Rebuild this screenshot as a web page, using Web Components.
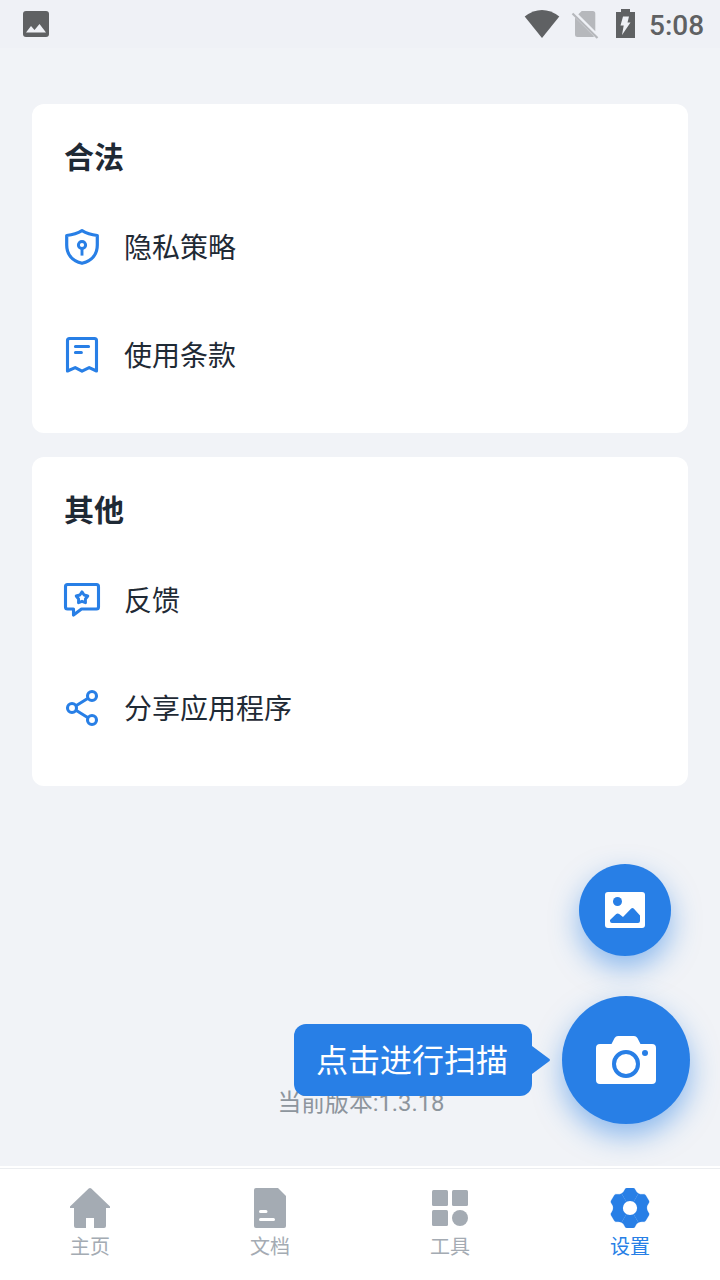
<!DOCTYPE html>
<html lang="zh-CN">
<head>
<meta charset="utf-8">
<title>设置</title>
<style>
body{margin:0;font-family:Roboto,"Noto Sans CJK SC",sans-serif;background:#f1f3f7}
</style>
</head>
<body>
<settings-screen></settings-screen>
<script>
const define = (name, html) => {
  const t = document.createElement('template');
  t.innerHTML = html;
  customElements.define(name, class extends HTMLElement {
    constructor() {
      super();
      this.attachShadow({mode: 'open'}).append(t.content.cloneNode(true));
    }
  });
};

// One gear tooth, repeated every 60 degrees around the hub.
const tooth = 'M0 0L-8.400-14.600Q-6.200-15.900-5.300-18.300Q-4.800-20-3.300-20L3.300-20Q4.800-20 5.300-18.300Q6.200-15.900 8.400-14.600Z';
const gear = `<g fill="currentColor" transform="translate(20 20)">${[0, 60, 120, 180, 240, 300].map(a => `<path d="${tooth}" stroke="currentColor" stroke-width=".2" transform="rotate(${a})"/>`).join('')}<circle r="7.100" fill="#fff"/></g>`;

const ICONS = {
  gear,
  shield: `<path d="M20 3.700C15.500 6.500 10.500 7.900 4.700 8.500V18C4.700 27.500 10.500 34 20 36.300C29.500 34 35.300 27.500 35.300 18V8.500C29.500 7.900 24.500 6.500 20 3.700Z" fill="none" stroke="currentColor" stroke-width="3.200" stroke-linejoin="round"/><circle cx="20" cy="18" r="3.600" fill="none" stroke="currentColor" stroke-width="3"/><path d="M20 21v7.600" stroke="currentColor" stroke-width="2.900"/>`,
  terms: `<path d="M5.500 36V5.500q0-2 2-2h25q2 0 2 2V36L27.200 32.600 20 36.200 13.200 32.600Z" fill="none" stroke="currentColor" stroke-width="3.100" stroke-linejoin="round"/><path d="M13.400 11.600h13.200M13.400 17.400h6" stroke="currentColor" stroke-width="3" stroke-linecap="round"/>`,
  feedback: `<path d="M5.500 4.500h29q2 0 2 2V27q0 2-2 2H19.500L11.500 35V29h-6q-2 0-2-2V6.500q0-2 2-2Z" fill="none" stroke="currentColor" stroke-width="3.100" stroke-linejoin="round"/><path d="M20 11.900L22.100 15 25.800 16 23.400 19 23.500 22.700 20 21.300 16.500 22.700 16.600 19 14.200 16 17.900 15Z" fill="none" stroke="currentColor" stroke-width="2.900" stroke-linejoin="round"/>`,
  share: `<g fill="none" stroke="currentColor" stroke-width="3.100"><circle cx="10" cy="20" r="4.500"/><circle cx="30" cy="8" r="4.500"/><circle cx="30" cy="32" r="4.500"/><path d="M14 17.700l12-7.400M14 22.300l12 7.400"/></g>`,
  home: `<path d="M18.700.6q1.300-1 2.600 0L40 18.600V20H36V38q0 2-2 2H24V30H16V40H6q-2 0-2-2V20H0V18.600Z" fill="currentColor"/>`,
  doc: `<path d="M6 0H28L36 8V38q0 2-2 2H6q-2 0-2-2V2q0-2 2-2Z" fill="currentColor"/><path d="M10.500 23.500h5.500M10.500 31.500H23.500" stroke="#fff" stroke-width="3" stroke-linecap="round"/>`,
  tools: `<g fill="currentColor"><rect x="2" y="2" width="16" height="16" rx="1.500"/><rect x="22" y="2" width="16" height="16" rx="1.500"/><rect x="2" y="22" width="16" height="16" rx="1.500"/><circle cx="30" cy="30" r="8"/></g>`,
  picture: `<path fill="#fff" d="M3 2H37q3 0 3 3V35q0 3-3 3H3q-3 0-3-3V5Q0 2 3 2Z"/><g fill="#287fe6"><circle cx="12.500" cy="11.500" r="4.500"/><path d="M5 30l6.200-6q1.500-1.200 3 0l3.800 3 8.200-8.400q1.300-1 2.500 0L35 25.500V31q0 2-2 2H7q-2 0-2-2Z"/></g>`
};
customElements.define('ui-icon', class extends HTMLElement {
  connectedCallback() {
    this.attachShadow({mode: 'open'}).innerHTML =
      `<style>:host{display:block;width:40px;height:40px;flex:none}svg{display:block}</style><svg width="40" height="40" viewBox="0 0 40 40">${ICONS[this.getAttribute('name')]}</svg>`;
  }
});

define('status-bar', `<style>
:host{display:flex;box-sizing:border-box;height:48px;background:#eff1f6;color:#5f6163;align-items:center;padding:0 17px 0 22px}
svg{display:block}.space{flex:1}
span{font:500 28px/48px Roboto,sans-serif;width:54px;padding-top:4px;white-space:nowrap}
</style>
<svg width="28" height="48"><rect x="1" y="11" width="26" height="26" rx="3" fill="currentColor"/><path d="M4 32.500 9 26l3.500 4L17.500 24l6.500 8.500Z" fill="#eff1f6"/></svg>
<div class="space"></div>
<svg width="125" height="48" viewBox="524 0 125 48"><path d="M524.700 16.500Q542 3.600 559.300 16.500L542 38Z" fill="currentColor"/>
<path d="M575 17.500V34.500q0 2.500 2.500 2.500h15.500l1.200-.4ZM578.300 14.300l3.500-3.300h11q2.500 0 2.500 2.500V31.300Z" fill="#b6b8bc"/><path d="M572.500 13.500L597.500 38" stroke="#b6b8bc" stroke-width="2.200"/>
<path d="M616 12h5V9h9v3h5v26h-19Z" fill="currentColor"/><path d="M623 16.500h6l-1.500 6h3l-8.500 12.500 1.700-9.500h-3.200Z" fill="#eff1f6"/></svg>
<span>5:08</span>`);

define('settings-card', `<style>
:host{display:block;box-sizing:border-box;background:#fff;border-radius:12px;padding:34px 32px 24px;height:329px}
h2{margin:0 0 15px;font-size:30px;line-height:40px;font-weight:700;color:#1f2a35}
</style><h2><slot name="title"></slot></h2><slot></slot>`);

define('settings-row', `<style>
:host{display:flex;align-items:center;gap:22px;height:108px;margin-left:-2px;color:#287fe6}
span{font-size:28px;line-height:40px;padding-top:4px;color:#1f2a35}
</style><slot name="icon"></slot><span><slot></slot></span>`);

define('nav-tab', `<style>
:host{display:flex;flex-direction:column;align-items:center;flex:1;color:#a4abb3;padding-top:19px}
:host([active]){color:#287fe6}
span{font-size:20px;line-height:28px;margin-top:5px}
</style><slot name="icon"></slot><span><slot></slot></span>`);

define('nav-bar', `<style>
:host{display:block;box-sizing:border-box;background:#fff;height:114px;padding-top:2px}
div{display:flex;border-top:1px solid #ebedf0}
</style><div><slot></slot></div>`);

define('round-button', `<style>
:host{display:flex;align-items:center;justify-content:center;border-radius:50%;background:#287fe6;box-shadow:0 12px 28px rgba(40,127,230,.5)}
</style><slot></slot>`);

define('scan-tip', `<style>
:host{display:flex;align-items:center}
span{box-sizing:border-box;width:238px;height:72px;border-radius:12px;background:#287fe6;color:#fff;font-size:32px;line-height:74px;text-align:center;padding-right:2px}
svg{display:block}
</style><span><slot></slot></span><svg width="19" height="30"><path d="M0 1 17.500 14q1 1 0 2L0 29Z" fill="#287fe6"/></svg>`);

define('settings-screen', `<style>
:host{display:flex;flex-direction:column;position:relative;width:720px;height:1280px;overflow:hidden;background:#f1f3f7}
main{flex:1;display:flex;flex-direction:column;gap:24px;padding:56px 32px 0}
.version{margin-top:275px;padding-left:2px;text-align:center;font-size:23.800px;line-height:36px;color:#8d959d}
nav-bar{position:relative}
round-button,scan-tip{position:absolute}
.pick{left:579px;top:864px;width:92px;height:92px}
.scan{left:562px;top:996px;width:128px;height:128px}
scan-tip{left:294px;top:1024px}
.scan svg{display:block}
</style>
<status-bar></status-bar>
<main>
<settings-card><span slot="title">合法</span>
<settings-row><ui-icon slot="icon" name="shield"></ui-icon>隐私策略</settings-row>
<settings-row><ui-icon slot="icon" name="terms"></ui-icon>使用条款</settings-row></settings-card>
<settings-card><span slot="title">其他</span>
<settings-row><ui-icon slot="icon" name="feedback"></ui-icon>反馈</settings-row>
<settings-row><ui-icon slot="icon" name="share"></ui-icon>分享应用程序</settings-row></settings-card>
<div class="version">当前版本:1.3.18</div>
</main>
<round-button class="pick"><ui-icon name="picture"></ui-icon></round-button>
<round-button class="scan"><svg width="60" height="48" viewBox="0 0 60 48"><path fill="#fff" d="M4 8H15.500L18.600 2Q19.800 0 22 0H38q2.200 0 3.400 2L44.500 8H56q4 0 4 4V44q0 4-4 4H4q-4 0-4-4V12Q0 8 4 8Z"/><circle cx="30" cy="28" r="12" fill="none" stroke="#287fe6" stroke-width="4"/><circle cx="49" cy="17" r="3" fill="#287fe6"/></svg></round-button>
<scan-tip>点击进行扫描</scan-tip>
<nav-bar>
<nav-tab><ui-icon slot="icon" name="home"></ui-icon>主页</nav-tab>
<nav-tab><ui-icon slot="icon" name="doc"></ui-icon>文档</nav-tab>
<nav-tab><ui-icon slot="icon" name="tools"></ui-icon>工具</nav-tab>
<nav-tab active><ui-icon slot="icon" name="gear"></ui-icon>设置</nav-tab>
</nav-bar>`);
</script>
</body>
</html>
